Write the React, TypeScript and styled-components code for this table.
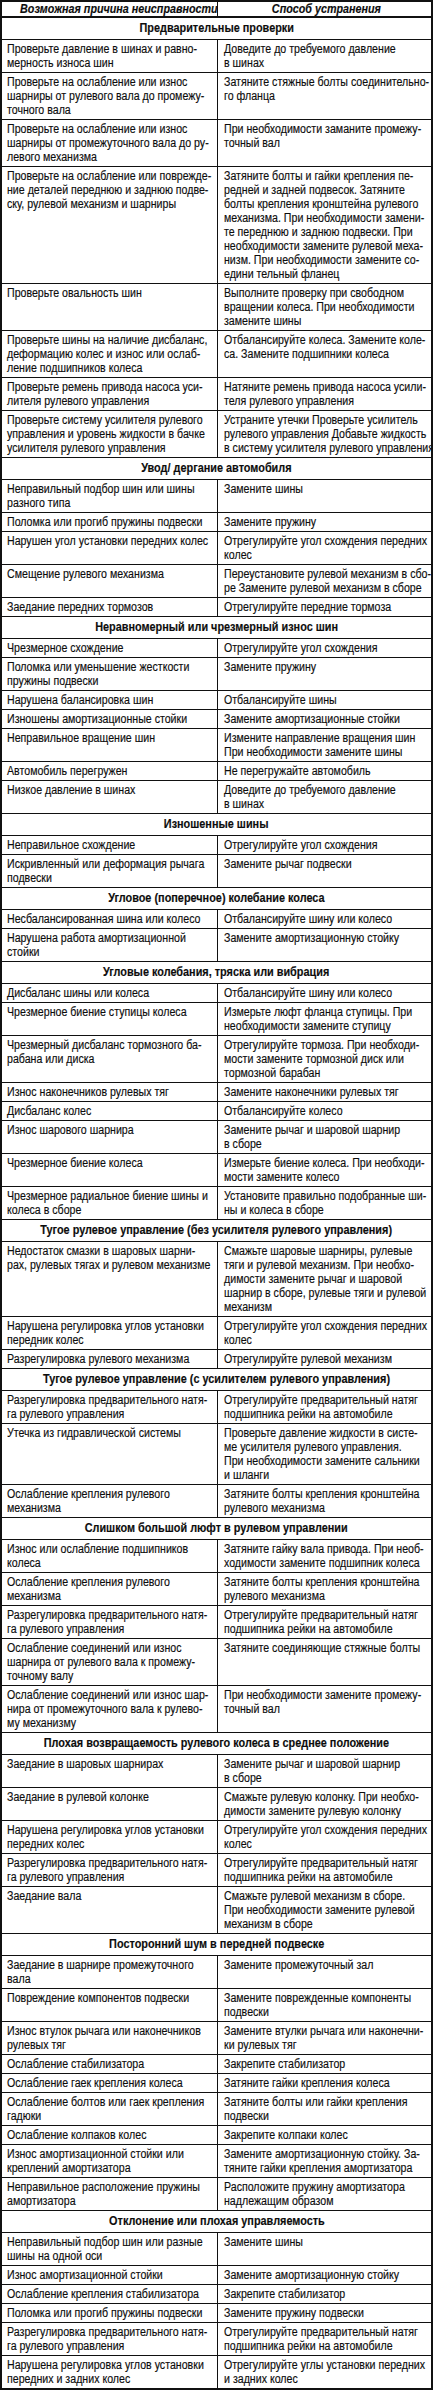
import React from "react";
import styled, { createGlobalStyle } from "styled-components";

const Global = createGlobalStyle`
  html, body { margin: 0; padding: 0; background: #fff; overflow-x: hidden; }
  body { width: 433px; }
`;

const FONT = `"Liberation Sans", Arial, sans-serif`;

const Table = styled.div`
  width: 433px;
  box-sizing: border-box;
  border: 2px solid #111;
  font-family: ${FONT};
  font-size: 12px;
  line-height: 14px;
  color: #0d0d0d;
  background: #fff;
  overflow: hidden;
  -webkit-text-stroke: 0.15px #0d0d0d;
`;

const Row = styled.div<{ $head?: boolean }>`
  display: grid;
  grid-template-columns: 215px 1fr;
  border-bottom: ${(p) => (p.$head ? "2px" : "1px")} solid #111;
  &:last-child { border-bottom: none; }
`;

const Cell = styled.div<{ $head?: boolean }>`
  padding: ${(p) => (p.$head ? "0 2px" : "2px 2px 2px 5px")};
  min-width: 0;
  text-align: ${(p) => (p.$head ? "center" : "left")};
  & + & {
    border-left: 1px solid #111;
    padding-left: ${(p) => (p.$head ? "2px" : "6px")};
  }
`;

const Line = styled.span`
  display: block;
  white-space: nowrap;
  transform: scaleX(0.885);
  transform-origin: 0 0;
`;

const HeadText = styled.span`
  display: inline-block;
  white-space: nowrap;
  font-size: 12.5px;
  font-weight: 700;
  font-style: italic;
  transform: scaleX(0.86);
  transform-origin: 50% 0;
`;

const SectionTitle = styled.div`
  padding: 3px 0 4px;
  text-align: center;
  border-bottom: 1px solid #111;
`;

const SectionText = styled.span`
  display: inline-block;
  white-space: nowrap;
  font-size: 12.5px;
  font-weight: 700;
  transform: scaleX(0.87);
  transform-origin: 50% 0;
`;

type Pair = [string, string];
type Section = { title: string; rows: Pair[] };

const data: Section[] = [
  {
    title: "Предварительные проверки",
    rows: [
      ["Проверьте давление в шинах и равно-\nмерность износа шин", "Доведите до требуемого давление\nв шинах"],
      ["Проверьте на ослабление или износ\nшарниры от рулевого вала до промежу-\nточного вала", "Затяните стяжные болты соединительно-\nго фланца"],
      ["Проверьте на ослабление или износ\nшарниры от промежуточного вала до ру-\nлевого механизма", "При необходимости заманите промежу-\nточный вал"],
      ["Проверьте на ослабление или поврежде-\nние деталей переднюю и заднюю подве-\nску, рулевой механизм и шарниры", "Затяните болты и гайки крепления пе-\nредней и задней подвесок. Затяните\nболты крепления кронштейна рулевого\nмеханизма. При необходимости замени-\nте переднюю и заднюю подвески. При\nнеобходимости замените рулевой меха-\nнизм. При необходимости замените со-\nедини тельный фланец"],
      ["Проверьте овальность шин", "Выполните проверку при свободном\nвращении колеса. При необходимости\nзамените шины"],
      ["Проверьте шины на наличие дисбаланс,\nдеформацию колес и износ или ослаб-\nление подшипников колеса", "Отбалансируйте колеса. Замените коле-\nса. Замените подшипники колеса"],
      ["Проверьте ремень привода насоса уси-\nлителя рулевого управления", "Натяните ремень привода насоса усили-\nтеля рулевого управления"],
      ["Проверьте систему усилителя рулевого\nуправления и уровень жидкости в бачке\nусилителя рулевого управления", "Устраните утечки Проверьте усилитель\nрулевого управления Добавьте жидкость\nв систему усилителя рулевого управления"],
    ],
  },
  {
    title: "Увод/ дергание автомобиля",
    rows: [
      ["Неправильный подбор шин или шины\nразного типа", "Замените шины"],
      ["Поломка или прогиб пружины подвески", "Замените пружину"],
      ["Нарушен угол установки передних колес", "Отрегулируйте угол схождения передних\nколес"],
      ["Смещение рулевого механизма", "Переустановите рулевой механизм в сбо-\nре Замените рулевой механизм в сборе"],
      ["Заедание передних тормозов", "Отрегулируйте передние тормоза"],
    ],
  },
  {
    title: "Неравномерный или чрезмерный износ шин",
    rows: [
      ["Чрезмерное схождение", "Отрегулируйте угол схождения"],
      ["Поломка или уменьшение жесткости\nпружины подвески", "Замените пружину"],
      ["Нарушена балансировка шин", "Отбалансируйте шины"],
      ["Изношены амортизационные стойки", "Замените амортизационные стойки"],
      ["Неправильное вращение шин", "Измените направление вращения шин\nПри необходимости замените шины"],
      ["Автомобиль перегружен", "Не перегружайте автомобиль"],
      ["Низкое давление в шинах", "Доведите до требуемого давление\nв шинах"],
    ],
  },
  {
    title: "Изношенные шины",
    rows: [
      ["Неправильное схождение", "Отрегулируйте угол схождения"],
      ["Искривленный или деформация рычага\nподвески", "Замените рычаг подвески"],
    ],
  },
  {
    title: "Угловое (поперечное) колебание колеса",
    rows: [
      ["Несбалансированная шина или колесо", "Отбалансируйте шину или колесо"],
      ["Нарушена работа амортизационной\nстойки", "Замените амортизационную стойку"],
    ],
  },
  {
    title: "Угловые колебания, тряска или вибрация",
    rows: [
      ["Дисбаланс шины или колеса", "Отбалансируйте шину или колесо"],
      ["Чрезмерное биение ступицы колеса", "Измерьте люфт фланца ступицы. При\nнеобходимости замените ступицу"],
      ["Чрезмерный дисбаланс тормозного ба-\nрабана или диска", "Отрегулируйте тормоза. При необходи-\nмости замените тормозной диск или\nтормозной барабан"],
      ["Износ наконечников рулевых тяг", "Замените наконечники рулевых тяг"],
      ["Дисбаланс колес", "Отбалансируйте колесо"],
      ["Износ шарового шарнира", "Замените рычаг и шаровой шарнир\nв сборе"],
      ["Чрезмерное биение колеса", "Измерьте биение колеса. При необходи-\nмости замените колесо"],
      ["Чрезмерное радиальное биение шины и\nколеса в сборе", "Установите правильно подобранные ши-\nны и колеса в сборе"],
    ],
  },
  {
    title: "Тугое рулевое управление (без усилителя рулевого управления)",
    rows: [
      ["Недостаток смазки в шаровых шарни-\nрах, рулевых тягах и рулевом механизме", "Смажьте шаровые шарниры, рулевые\nтяги и рулевой механизм. При необхо-\nдимости замените рычаг и шаровой\nшарнир в сборе, рулевые тяги и рулевой\nмеханизм"],
      ["Нарушена регулировка углов установки\nпередник колес", "Отрегулируйте угол схождения передних\nколес"],
      ["Разрегулировка рулевого механизма", "Отрегулируйте рулевой механизм"],
    ],
  },
  {
    title: "Тугое рулевое управление (с усилителем рулевого управления)",
    rows: [
      ["Разрегулировка предварительного натя-\nга рулевого управления", "Отрегулируйте предварительный натяг\nподшипника рейки на автомобиле"],
      ["Утечка из гидравлической системы", "Проверьте давление жидкости в систе-\nме усилителя рулевого управления.\nПри необходимости замените сальники\nи шланги"],
      ["Ослабление крепления рулевого\nмеханизма", "Затяните болты крепления кронштейна\nрулевого механизма"],
    ],
  },
  {
    title: "Слишком большой люфт в рулевом управлении",
    rows: [
      ["Износ или ослабление подшипников\nколеса", "Затяните гайку вала привода. При необ-\nходимости замените подшипник колеса"],
      ["Ослабление крепления рулевого\nмеханизма", "Затяните болты крепления кронштейна\nрулевого механизма"],
      ["Разрегулировка предварительного натя-\nга рулевого управления", "Отрегулируйте предварительный натяг\nподшипника рейки на автомобиле"],
      ["Ослабление соединений или износ\nшарнира от рулевого вала к промежу-\nточному валу", "Затяните соединяющие стяжные болты"],
      ["Ослабление соединений или износ шар-\nнира от промежуточного вала к рулево-\nму механизму", "При необходимости замените промежу-\nточный вал"],
    ],
  },
  {
    title: "Плохая возвращаемость рулевого колеса в среднее положение",
    rows: [
      ["Заедание в шаровых шарнирах", "Замените рычаг и шаровой шарнир\nв сборе"],
      ["Заедание в рулевой колонке", "Смажьте рулевую колонку. При необхо-\nдимости замените рулевую колонку"],
      ["Нарушена регулировка углов установки\nпередних колес", "Отрегулируйте угол схождения передних\nколес"],
      ["Разрегулировка предварительного натя-\nга рулевого управления", "Отрегулируйте предварительный натяг\nподшипника рейки на автомобиле"],
      ["Заедание вала", "Смажьте рулевой механизм в сборе.\nПри необходимости замените рулевой\nмеханизм в сборе"],
    ],
  },
  {
    title: "Посторонний шум в передней подвеске",
    rows: [
      ["Заедание в шарнире промежуточного\nвала", "Замените промежуточный зал"],
      ["Повреждение компонентов подвески", "Замените поврежденные компоненты\nподвески"],
      ["Износ втулок рычага или наконечников\nрулевых тяг", "Замените втулки рычага или наконечни-\nки рулевых тяг"],
      ["Ослабление стабилизатора", "Закрепите стабилизатор"],
      ["Ослабление гаек крепления колеса", "Затяните гайки крепления колеса"],
      ["Ослабление болтов или гаек крепления\nгадюки", "Затяните болты или гайки крепления\nподвески"],
      ["Ослабление колпаков колес", "Закрепите колпаки колес"],
      ["Износ амортизационной стойки или\nкреплений амортизатора", "Замените амортизационную стойку. За-\nтяните гайки крепления амортизатора"],
      ["Неправильное расположение пружины\nамортизатора", "Расположите пружину амортизатора\nнадлежащим образом"],
    ],
  },
  {
    title: "Отклонение или плохая управляемость",
    rows: [
      ["Неправильный подбор шин или разные\nшины на одной оси", "Замените шины"],
      ["Износ амортизационной стойки", "Замените амортизационную стойку"],
      ["Ослабление крепления стабилизатора", "Закрепите стабилизатор"],
      ["Поломка или прогиб пружины подвески", "Замените пружину подвески"],
      ["Разрегулировка предварительного натя-\nга рулевого управления", "Отрегулируйте предварительный натяг\nподшипника рейки на автомобиле"],
      ["Нарушена регулировка углов установки\nпередних и задних колес", "Отрегулируйте углы установки передних\nи задних колес"],
    ],
  },
];

const Lines: React.FC<{ text: string }> = ({ text }) => (
  <>
    {text.split("\n").map((l, i) => (
      <Line key={i}>{l}</Line>
    ))}
  </>
);

export default function App() {
  const items: React.ReactNode[] = [];
  data.forEach((s, si) => {
    items.push(
      <SectionTitle key={`s${si}`}>
        <SectionText>{s.title}</SectionText>
      </SectionTitle>
    );
    s.rows.forEach((r, ri) => {
      items.push(
        <Row key={`r${si}-${ri}`}>
          <Cell>
            <Lines text={r[0]} />
          </Cell>
          <Cell>
            <Lines text={r[1]} />
          </Cell>
        </Row>
      );
    });
  });
  return (
    <>
      <Global />
      <Table>
        <Row $head>
          <Cell $head>
            <HeadText>Возможная причина неисправности</HeadText>
          </Cell>
          <Cell $head>
            <HeadText>Способ устранения</HeadText>
          </Cell>
        </Row>
        {items}
      </Table>
    </>
  );
}
